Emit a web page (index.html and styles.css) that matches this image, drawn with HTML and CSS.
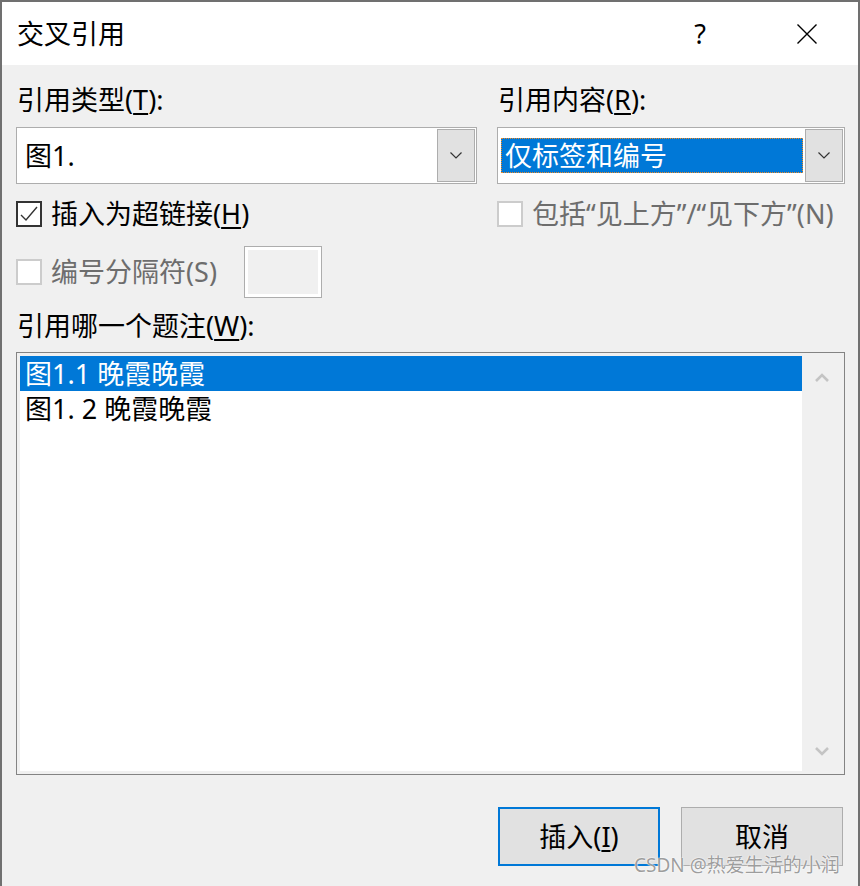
FILE: index.html
```html
<!DOCTYPE html>
<html lang="zh-CN">
<head>
<meta charset="utf-8">
<title>交叉引用</title>
<link rel="stylesheet" href="styles.css">
</head>
<body>
<div class="window">
  <div class="titlebar">
    <span class="title">交叉引用</span>
    <span class="help">?</span>
    <span class="close">
      <svg width="20" height="20" viewBox="0 0 20 20"><path d="M0.5 0.5 L19.5 19.5 M19.5 0.5 L0.5 19.5" stroke="#000" stroke-width="1.4" fill="none"/></svg>
    </span>
  </div>
  <div class="content">
    <div class="grid labels">
      <div class="label">引用类型(<u>T</u>):</div>
      <div class="label">引用内容(<u>R</u>):</div>
    </div>
    <div class="grid combos">
      <div class="combo">
        <span class="combo-text">图1.</span>
        <span class="drop"><svg width="12" height="7" viewBox="0 0 12 7"><path d="M0.5 0.5 L6 6 L11.5 0.5" stroke="#333" stroke-width="1.2" fill="none"/></svg></span>
      </div>
      <div class="combo">
        <span class="combo-text selected">仅标签和编号</span>
        <span class="drop"><svg width="12" height="7" viewBox="0 0 12 7"><path d="M0.5 0.5 L6 6 L11.5 0.5" stroke="#333" stroke-width="1.2" fill="none"/></svg></span>
      </div>
    </div>
    <div class="grid checks">
      <label class="check">
        <span class="box checked"><svg width="22" height="22" viewBox="0 0 22 22"><path d="M3 12 L8 17 L19 4" stroke="#333" stroke-width="1.4" fill="none"/></svg></span>
        <span>插入为超链接(<u>H</u>)</span>
      </label>
      <label class="check disabled">
        <span class="box"></span>
        <span>包括“见上方”/“见下方”(N)</span>
      </label>
    </div>
    <div class="sep-row">
      <label class="check disabled">
        <span class="box"></span>
        <span>编号分隔符(S)</span>
      </label>
      <span class="sep-input"></span>
    </div>
    <div class="label which">引用哪一个题注(<u>W</u>):</div>
    <div class="list">
      <div class="items">
        <div class="item selected">图1.1 晚霞晚霞</div>
        <div class="item">图1. 2 晚霞晚霞</div>
      </div>
      <div class="scroll">
        <svg width="14" height="9" viewBox="0 0 14 9"><path d="M1 8 L7 2 L13 8" stroke="#c4c4c4" stroke-width="2.6" fill="none"/></svg>
        <svg width="14" height="9" viewBox="0 0 14 9"><path d="M1 1 L7 7 L13 1" stroke="#c4c4c4" stroke-width="2.6" fill="none"/></svg>
      </div>
    </div>
    <div class="buttons">
      <button class="btn default">插入(<u>I</u>)</button>
      <button class="btn">取消</button>
    </div>
  </div>
  <div class="watermark">CSDN @热爱生活的小润</div>
</div>
</body>
</html>
```
FILE: styles.css
```css
* { box-sizing: border-box; }
html, body { margin: 0; padding: 0; background: #f0f0f0; }
body {
  font-family: "Noto Sans", "Noto Sans CJK SC", sans-serif;
  font-size: 27px;
  color: #000;
}
u { text-decoration-thickness: 2px; text-underline-offset: 3px; }
.window {
  position: relative;
  width: 860px;
  height: 886px;
  border: 2px solid #707070;
  border-bottom: none;
  background: #f0f0f0;
  overflow: hidden;
}
.titlebar {
  height: 63px;
  background: #fff;
  display: flex;
  align-items: center;
  padding-left: 15px;
}
.title { flex: 1; font-size: 27px; line-height: 34px; }
.help { width: 20px; text-align: center; font-size: 27px; line-height: 34px; margin-right: 87px; }
.close { width: 20px; height: 20px; margin-right: 41px; display: flex; }
.content { padding: 0 13px 0 14px; }
.grid {
  display: grid;
  grid-template-columns: 461px 348px;
  column-gap: 20px;
}
.label { line-height: 34px; padding-left: 1px; }
.labels { margin-top: 18px; }
.combos { margin-top: 10px; }
.combo {
  height: 57px;
  border: 1px solid #adadad;
  background: #fff;
  display: flex;
  align-items: center;
  padding: 0 1px 0 3px;
}
.combo-text {
  flex: 1;
  height: 35px;
  line-height: 35px;
  padding-left: 5px;
}
.combo-text.selected {
  background: #0078d7;
  color: #fff;
  padding-left: 4px;
  margin-right: 2px;
  outline: 1px dotted #f08a24;
  outline-offset: -1px;
}
.drop {
  width: 38px;
  height: 53px;
  background: #e1e1e1;
  border: 1px solid #adadad;
  display: flex;
  align-items: center;
  justify-content: center;
}
.checks { margin-top: 17px; }
.check {
  display: flex;
  align-items: center;
  height: 26px;
  line-height: 34px;
  gap: 9px;
  white-space: nowrap;
}
.box {
  width: 26px;
  height: 26px;
  border: 2px solid #333;
  background: #fff;
  display: flex;
  align-items: center;
  justify-content: center;
  flex: none;
}
.check.disabled { color: #6d6d6d; }
.check.disabled .box { border-color: #cccccc; }
.sep-row {
  margin-top: 19px;
  height: 52px;
  display: flex;
  align-items: center;
  gap: 27px;
}
.sep-input {
  flex: none;
  width: 78px;
  height: 52px;
  border: 1px solid #adadad;
  background: #f0f0f0;
  box-shadow: inset 0 0 0 3px #fff;
}
.which { margin-top: 11px; }
.list {
  margin-top: 9px;
  height: 423px;
  border: 1px solid #838383;
  padding: 3px;
  background: #f0f0f0;
  display: flex;
}
.items { flex: 1; background: #fff; }
.item { height: 35px; line-height: 35px; padding-left: 5px; white-space: pre; }
.item.selected { background: #0078d7; color: #fff; }
.scroll {
  width: 39px;
  display: flex;
  flex-direction: column;
  justify-content: space-between;
  align-items: center;
  padding: 17px 0 15px;
}
.buttons {
  margin-top: 32px;
  display: flex;
  justify-content: flex-end;
  gap: 21px;
  padding-right: 2px;
}
.btn {
  width: 162px;
  height: 59px;
  background: #e1e1e1;
  border: 1px solid #adadad;
  font-family: inherit;
  font-size: 27px;
  color: #000;
  padding: 0;
  line-height: 34px;
}
.btn.default { border: 2px solid #0078d7; }
.watermark {
  position: absolute;
  left: 632px;
  top: 849px;
  font-size: 19px;
  line-height: 28px;
  color: rgba(140,140,140,0.85);
  text-shadow: 0 0 1px #fff, 0 0 2px #fff;
  white-space: nowrap;
}
```
